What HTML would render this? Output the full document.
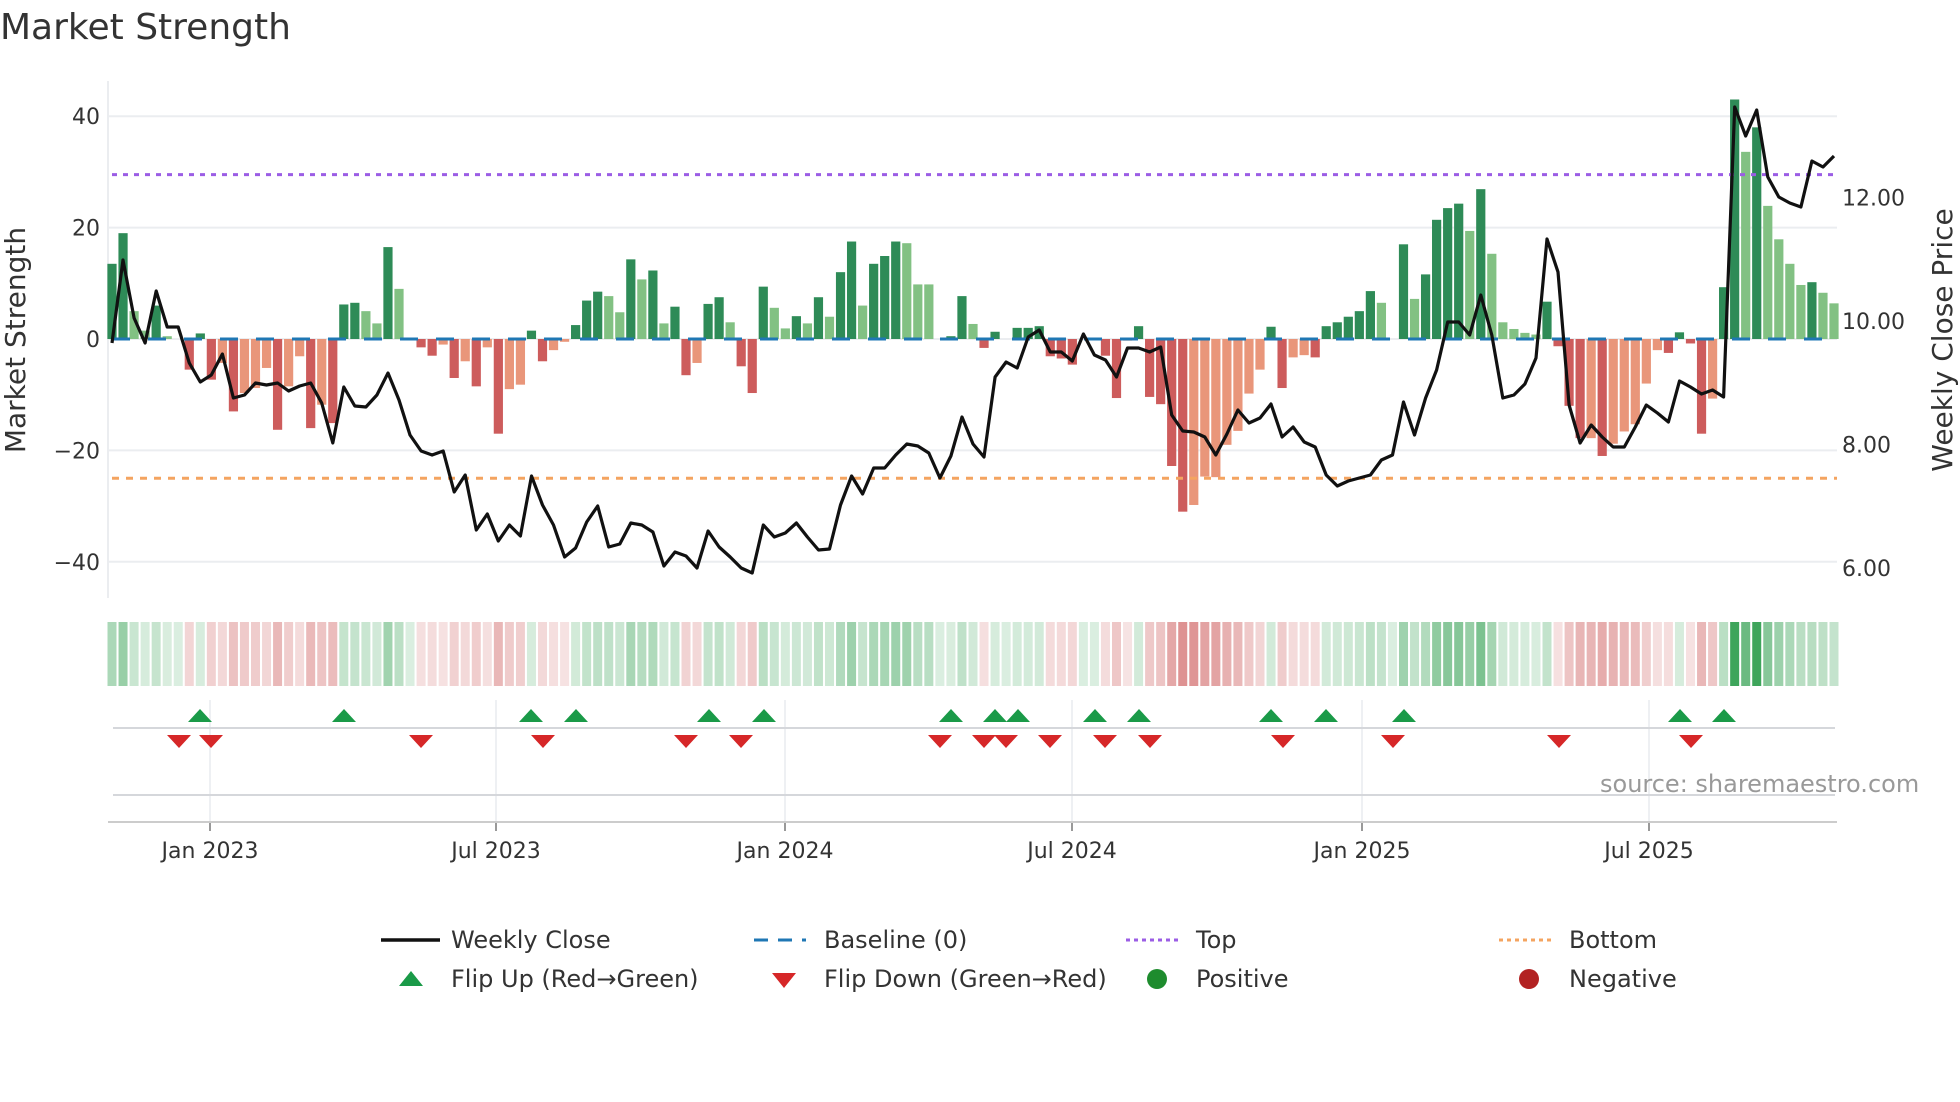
<!DOCTYPE html>
<html><head><meta charset="utf-8">
<style>
html,body{margin:0;padding:0;background:#fff;}
body{width:1960px;height:1102px;overflow:hidden;}
svg{display:block;font-family:"DejaVu Sans","Liberation Sans",sans-serif;}
</style></head>
<body>
<svg id="s" width="1960" height="1102" viewBox="0 0 1960 1102" xmlns="http://www.w3.org/2000/svg">
<text x="0" y="39" font-size="36" fill="#333">Market Strength</text>
<g id="grid"></g>
<g id="heat"></g>
<g id="bars"></g>
<g id="over"></g>
<g id="flips"></g>
<text x="1600" y="792" font-size="24" fill="#999">source: sharemaestro.com</text>
<g font-size="24" fill="#333">
<line x1="381" y1="940" x2="440" y2="940" stroke="#111" stroke-width="3.5"/>
<text x="451" y="948">Weekly Close</text>
<line x1="754" y1="940" x2="806" y2="940" stroke="#1f77b4" stroke-width="3" stroke-dasharray="14 10"/>
<text x="824" y="948">Baseline (0)</text>
<line x1="1126" y1="940" x2="1181" y2="940" stroke="#9b5de5" stroke-width="3" stroke-dasharray="4 4"/>
<text x="1196" y="948">Top</text>
<line x1="1499" y1="940" x2="1554" y2="940" stroke="#f4a460" stroke-width="3" stroke-dasharray="4 4"/>
<text x="1569" y="948">Bottom</text>
<polygon points="399,986 423,986 411,971" fill="#1a9a48"/>
<text x="451" y="987">Flip Up (Red→Green)</text>
<polygon points="772,973 796,973 784,988" fill="#d62728"/>
<text x="824" y="987">Flip Down (Green→Red)</text>
<circle cx="1157" cy="979" r="10" fill="#1e8c2e"/>
<text x="1196" y="987">Positive</text>
<circle cx="1529" cy="979" r="10" fill="#b22222"/>
<text x="1569" y="987">Negative</text>
</g>
</svg>
<script>
var NS="http://www.w3.org/2000/svg";
function el(p,t,a,txt){var e=document.createElementNS(NS,t);for(var k in a)e.setAttribute(k,a[k]);if(txt!=null)e.textContent=txt;p.appendChild(e);return e;}
var g=document.getElementById('grid'),b=document.getElementById('bars'),o=document.getElementById('over'),h=document.getElementById('heat'),f=document.getElementById('flips'),s=document.getElementById('s');
var L=108,R=1837,Z=339,U=5.57;
function yv(v){return Z-v*U;}
function yp(p){return 321-(p-10)*61.8;}
[40,20,0,-20,-40].forEach(function(v){el(g,'line',{x1:L,x2:R,y1:yv(v),y2:yv(v),stroke:'#ebedf0','stroke-width':2});
 el(g,'text',{x:100,y:yv(v)+8,'text-anchor':'end','font-size':22,fill:'#333'},v<0?'\u2212'+(-v):''+v);});
el(g,'line',{x1:L,x2:L,y1:81,y2:598,stroke:'#ebedf0','stroke-width':2});
[[12,'12.00'],[10,'10.00'],[8,'8.00'],[6,'6.00']].forEach(function(p){el(g,'text',{x:1842,y:yp(p[0])+8,'font-size':22,fill:'#333'},p[1]);});
el(g,'text',{transform:'translate(25,340) rotate(-90)','text-anchor':'middle','font-size':28,fill:'#333'},'Market Strength');
el(g,'text',{transform:'translate(1952,340) rotate(-90)','text-anchor':'middle','font-size':28,fill:'#333'},'Weekly Close Price');
[[210,'Jan 2023'],[496,'Jul 2023'],[785,'Jan 2024'],[1072,'Jul 2024'],[1362,'Jan 2025'],[1649,'Jul 2025']].forEach(function(t){
 el(g,'line',{x1:t[0],x2:t[0],y1:700,y2:822,stroke:'#eef0f3','stroke-width':2});
 el(g,'line',{x1:t[0],x2:t[0],y1:822,y2:831,stroke:'#999','stroke-width':2});
 el(g,'text',{x:t[0],y:858,'text-anchor':'middle','font-size':22,fill:'#333'},t[1]);});
el(g,'line',{x1:113,x2:1835,y1:728,y2:728,stroke:'#d5d7db','stroke-width':2});
el(g,'line',{x1:113,x2:1835,y1:795,y2:795,stroke:'#d5d7db','stroke-width':2});
el(g,'line',{x1:108,x2:1837,y1:822,y2:822,stroke:'#ccc','stroke-width':2});
var D="13.5d 19d 5l 1.5l 6d 0.5l 0 -5.5d 1d -7.3d -4.3l -13d -9.7l -8.8l -5.2l -16.3d -8.5l -3.1l -16d -11.8l -15.1d 6.2d 6.5d 5l 2.8l 16.5d 9l 0 -1.5d -3d -1l -7d -4l -8.5d -1.5l -17d -9l -8.2l 1.5d -4d -2l -0.5l 2.5d";
var A=D.split(' ');
var D2="6.9d 8.5d 7.7l 4.8l 14.3d 10.7l 12.3d 2.8l 5.8d -6.5d -4.3l 6.3d 7.5d 3l -4.9d -9.7d 9.4d 5.6l 1.9l 4.1d 2.8l 7.5d 4l 12d 17.5d 6l 13.5d 14.9d 17.5d 17.2l 9.8l 9.8l 0 0.5d 7.7d 2.7l -1.6d 1.3d 0 2d 2d 2.3d -3.1d -3.5d -4.6d 0 0 -3d -10.6d -0.3l 2.3d -10.4d -11.7d -22.8d -31d -29.8l -24.7l -24.8l -19l -16.5l -9.8l -5.5l 2.2d -8.8d -3.3l -2.9l -3.3d 2.3d 3d 4d 5d 8.6d 6.5l 0 17d 7.2l 11.6d 21.4d 23.5d 24.3d 19.4l 26.9d 15.3l 3l 1.8l 1.1l 0.8l 6.7d -1.3d -12d -17.8d -17.8l -21d -18.8l -16.6l -15.3l -8l -2l -2.5d 1.2d -0.8d -17d -10.7l 9.3d 43d 33.6l 38d 23.9l 17.9l 13.5l 9.7l 10.2d 8.3l 6.4l";
A=A.concat(D2.split(' '));
var P=[343,260,318,343,291,327,327,363,382,375,354,398,395,383,385,383,391,386,383,403,443,387,406,407,395,373,400,435,451,455,451,492,475,530,514,541,525,536,476,505,525,557,548,522,506,547,544,523,525,532,566,552,556,568,531,547,557,568,573,525,537,533,523,537,550,549,505,476,494,468,468,455,444,446,453,478,456,417,444,457,377,362,368,337,330,352,352,361,334,355,360,377,348,348,352,347,415,431,432,437,455,434,410,423,418,404,437,427,442,447,475,486,481,478,475,460,455,402,435,398,370,322,322,335,295,335,398,395,384,358,239,272,405,443,425,437,447,447,427,405,413,422,381,387,394,390,397,107,136,110,177,197,203,207,161,167,156];
var N=A.length, X0=112, DX=(1834-112)/(N-1);
for(var i=0;i<N;i++){
 var t=A[i],v=parseFloat(t),sh=t.slice(-1);
 var x=X0+i*DX;
 if(v!==0){
  var c = v>0 ? (sh=='l'?'#82c183':'#2e8b57') : (sh=='l'?'#e9967a':'#cd5c5c');
  var y1=Math.min(Z,yv(v)),hh=Math.abs(v)*U;
  el(b,'rect',{x:x-4.6,y:y1,width:9.2,height:hh,fill:c});
 }
 var a=Math.min(Math.abs(v)/32,1);
 var al=0.18+0.55*a; if(Math.abs(v)>35) al=0.95;
 el(h,'rect',{x:x-4.5,y:622,width:9,height:64,fill:v>=0?'rgb(52,160,82)':'rgb(200,75,75)','fill-opacity':v>=0?al:al*0.85});
}
el(o,'line',{x1:X0,x2:R,y1:Z,y2:Z,stroke:'#1f77b4','stroke-width':3,'stroke-dasharray':'18 18'});
el(o,'line',{x1:X0,x2:R,y1:yv(29.5),y2:yv(29.5),stroke:'#9b5de5','stroke-width':3,'stroke-dasharray':'5 6'});
el(o,'line',{x1:X0,x2:R,y1:yv(-25),y2:yv(-25),stroke:'#f4a460','stroke-width':3,'stroke-dasharray':'7 7'});
var pts=[];for(var i=0;i<P.length&&i<N;i++)pts.push((X0+i*DX).toFixed(1)+','+P[i]);
el(o,'polyline',{points:pts.join(' '),fill:'none',stroke:'#111','stroke-width':3.2,'stroke-linejoin':'round'});
[200,344,531,576,709,764,951,995,1018,1095,1139,1271,1326,1404,1680,1724].forEach(function(x){
 el(f,'polygon',{points:(x-12)+',722 '+(x+12)+',722 '+x+',709',fill:'#1a9a48'});});
[179,211,421,543,686,741,940,984,1006,1050,1105,1150,1283,1393,1559,1691].forEach(function(x){
 el(f,'polygon',{points:(x-12)+',735 '+(x+12)+',735 '+x+',748',fill:'#d62728'});});
</script>
</body></html>
